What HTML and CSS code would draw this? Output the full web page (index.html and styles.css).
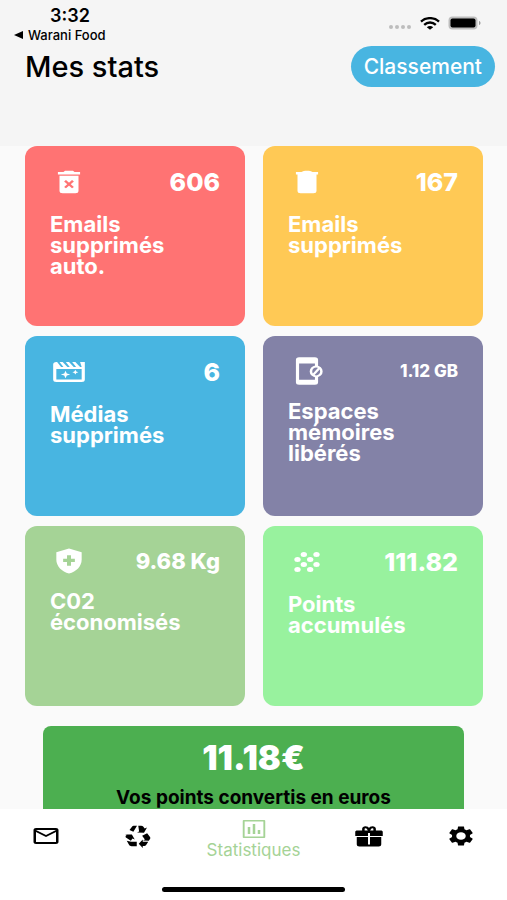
FILE: index.html
```html
<!DOCTYPE html>
<html lang="fr">
<head>
  <meta charset="UTF-8">
  <meta name="viewport" content="width=device-width, initial-scale=1.0">
  <title>Mes stats</title>
  <link rel="stylesheet" href="styles.css">
</head>
<body>
  <header class="header">
    <div class="status">
      <div class="status-left">
        <span class="time">3:32</span>
        <a class="back" href="#">
          <svg class="back-arrow" viewBox="0 0 9 8"><path d="M0 4L9 0v8z"/></svg>
          Warani Food
        </a>
      </div>
      <div class="status-right">
        <svg class="signal" viewBox="0 0 24 14" fill="#bdbdbd">
          <circle cx="3" cy="11" r="2"/><circle cx="9" cy="11" r="2"/><circle cx="15" cy="11" r="2"/><circle cx="21" cy="11" r="2"/>
        </svg>
        <svg class="wifi" viewBox="0 0 20 13" preserveAspectRatio="none" fill="none" stroke="#000" stroke-width="2.4">
          <path d="M1 4.6C6 0 14 0 19 4.6"/>
          <path d="M4.2 7.8c3.300-3 8.300-3 11.600 0"/>
          <path d="M10 12.800L6.800 10.300c1.800-1.600 4.600-1.600 6.400 0z" fill="#000" stroke="none"/>
        </svg>
        <svg class="battery" viewBox="0 0 33 14">
          <rect x="0.500" y="0.500" width="29" height="13" rx="4" fill="#bdbdbd"/>
          <rect x="2.500" y="2.500" width="25" height="9" rx="2"/>
          <path d="M31 5c2 .6 2 3.400 0 4z" fill="#9e9e9e"/>
        </svg>
      </div>
    </div>
    <div class="title-row">
      <h1 class="title">Mes stats</h1>
      <button class="ranking" type="button">Classement</button>
    </div>
  </header>

  <main class="content">
    <div class="cards">
      <section class="card red">
        <div class="card-top">
          <svg class="icon" viewBox="0 0 24 24" preserveAspectRatio="none">
            <path d="M19 4h-3.500l-1-1h-5l-1 1H5v2h14zM6 19a2 2 0 0 0 2 2h8a2 2 0 0 0 2-2V7H6z"/>
            <path d="M9.500 11l5 5.500m0-5.500l-5 5.500" fill="none" stroke="#ff7373" stroke-width="1.600"/>
          </svg>
          <span class="value">606</span>
        </div>
        <h2 class="label">Emails supprimés auto.</h2>
      </section>

      <section class="card yellow">
        <div class="card-top">
          <svg class="icon" viewBox="0 0 24 24" preserveAspectRatio="none">
            <path d="M19 4h-3.500C14 2.700 10 2.700 8.500 4H5v2h14zM6 19a2 2 0 0 0 2 2h8a2 2 0 0 0 2-2V6H6z"/>
          </svg>
          <span class="value">167</span>
        </div>
        <h2 class="label">Emails supprimés</h2>
      </section>

      <section class="card blue">
        <div class="card-top">
          <svg class="icon" viewBox="0 0 24 24" preserveAspectRatio="none">
            <path fill-rule="evenodd" d="M22 4h-3l1 4h-1l-3-4h-2l2.500 4h-1.500l-3-4h-2l2.500 4H11L8 4H6l2.500 4H7L4.500 4H4a2 2 0 0 0-2 2v12a2 2 0 0 0 2 2h16a2 2 0 0 0 2-2zM4 9.600h16V18H4z"/>
            <path d="M9.800 11l.8 2.200 2.200.8-2.200.8-.8 2.200-.8-2.200-2.200-.8 2.200-.8zM16 10.200l.6 1.300 1.300.6-1.300.6-.6 1.300-.6-1.300-1.300-.6 1.300-.6z"/>
          </svg>
          <span class="value">6</span>
        </div>
        <h2 class="label">Médias supprimés</h2>
      </section>

      <section class="card purple">
        <div class="card-top compact">
          <svg class="icon" viewBox="0 0 24 24" preserveAspectRatio="none">
            <path d="M7 1h10a2 2 0 0 1 2 2v5h-2V6H7v13h10v-3h2v5a2 2 0 0 1-2 2H7a2 2 0 0 1-2-2V3a2 2 0 0 1 2-2z"/>
            <ellipse cx="17.800" cy="12.300" rx="3.300" ry="4" fill="none" stroke="#fff" stroke-width="1.600"/>
            <path d="M16 15l3.800-5.300" stroke="#fff" stroke-width="1.600"/>
          </svg>
          <span class="value value-small">1.12 GB</span>
        </div>
        <h2 class="label">Espaces mémoires libérés</h2>
      </section>

      <section class="card olive">
        <div class="card-top compact">
          <svg class="icon" viewBox="0 0 24 24" preserveAspectRatio="none">
            <path d="M12 2L4 5v6.090c0 5.050 3.410 9.760 8 10.910 4.590-1.150 8-5.860 8-10.910V5z"/>
            <path d="M12 7.300v8.400M8.300 11.500h7.400" stroke="#a5d396" stroke-width="2.500"/>
          </svg>
          <span class="value value-medium">9.68 Kg</span>
        </div>
        <h2 class="label">C02 économisés</h2>
      </section>

      <section class="card mint">
        <div class="card-top">
          <svg class="icon" viewBox="0 0 24 24" preserveAspectRatio="none">
            <circle cx="10" cy="6" r="2"/><circle cx="18" cy="6" r="2"/>
            <circle cx="6" cy="10" r="2"/><circle cx="14" cy="10" r="2"/>
            <circle cx="10" cy="14" r="2"/><circle cx="18" cy="14" r="2"/>
            <circle cx="6" cy="18" r="2"/><circle cx="14" cy="18" r="2"/>
          </svg>
          <span class="value">111.82</span>
        </div>
        <h2 class="label">Points accumulés</h2>
      </section>
    </div>

    <section class="euros">
      <p class="amount">11.18€</p>
      <p class="amount-label">Vos points convertis en euros</p>
    </section>
  </main>

  <footer class="footer">
    <nav class="tabs">
      <a class="tab" href="#" aria-label="Emails">
        <svg class="tab-icon" viewBox="0 0 24 24" preserveAspectRatio="none">
          <path d="M22 6c0-1.100-.9-2-2-2H4c-1.100 0-2 .9-2 2v12c0 1.100.9 2 2 2h16c1.100 0 2-.9 2-2V6zm-2 0l-8 5-8-5h16zm0 12H4V8l8 5 8-5v10z"/>
        </svg>
      </a>
      <a class="tab" href="#" aria-label="Recyclage">
        <svg class="tab-icon" viewBox="0 0 24 24" preserveAspectRatio="none">
          <path d="M8.300 7.800L5.200 6l2-3.300c.4-.7 1-.9 1.700-.9h2.300zM12.200 1.800h2.300c.8 0 1.400.4 1.800 1l1 1.700 1.900-1-2.400 5.200-5.600-.2 1.700-1.100zM1.600 10.500l5.500.1 2.300 4.900-1.800-1-1.300 2.300-4-3.300c-.4-.8-.3-1.500.2-2.300l.8-.3zM3 16.800l3.500 1H11v4.400H6.800c-.9 0-1.500-.4-1.900-1.100zM19.300 9.200l2.300 3.800c.4.700.4 1.400 0 2.100l-1 1.700-4.600-.2 1.500-1-2.200-3.900zM20.200 17.800l-1.700 3.200c-.4.700-1 1.100-1.900 1.100h-.8V24l-3.200-4.200 3.200-4.200v2.200z"/>
        </svg>
      </a>
      <a class="tab active" href="#">
        <svg class="tab-icon" viewBox="0 0 24 24" preserveAspectRatio="none">
          <path d="M9 17H7v-7h2v7zm4 0h-2V7h2v10zm4 0h-2v-4h2v4zm2.500 2.400h-15V4.600h15v14.800zM20 3H4c-.6 0-1 .4-1 1v16c0 .6.400 1 1 1h16c.6 0 1-.4 1-1V4c0-.6-.4-1-1-1z"/>
        </svg>
        Statistiques
      </a>
      <a class="tab" href="#" aria-label="Cadeaux">
        <svg class="tab-icon" viewBox="0 0 24 24" preserveAspectRatio="none">
          <path d="M2.500 6.500h19c.8 0 1.500.6 1.500 1.400V12H1V7.900c0-.8.700-1.400 1.500-1.400zM2.200 13h19.600v7.500a2 2 0 0 1-2 2H4.200a2 2 0 0 1-2-2z"/>
          <path d="M7.500 7V4.800c0-2 3-2 4 .2l.5 1.500.5-1.500c1-2.200 4-2.200 4-.2V7" fill="none" stroke="#000" stroke-width="2"/>
          <path d="M12 9v11.500" stroke="#fff" stroke-width="1.600"/>
        </svg>
      </a>
      <a class="tab" href="#" aria-label="Réglages">
        <svg class="tab-icon" viewBox="0 0 24 24" preserveAspectRatio="none">
          <path d="M19.140 12.940c.04-.3.060-.61.060-.94 0-.32-.02-.64-.07-.94l2.030-1.580c.18-.14.230-.41.120-.61l-1.920-3.320c-.12-.22-.37-.29-.59-.22l-2.390.96c-.5-.38-1.030-.7-1.620-.94l-.36-2.540c-.04-.24-.24-.41-.48-.41h-3.840c-.24 0-.43.170-.47.410l-.36 2.540c-.59.240-1.130.570-1.620.940l-2.390-.96c-.22-.08-.47 0-.59.220L2.740 8.870c-.12.210-.08.470.120.610l2.030 1.580c-.05.300-.09.630-.09.940s.02.640.070.940l-2.030 1.580c-.18.140-.23.410-.12.610l1.920 3.320c.12.220.370.290.590.220l2.390-.96c.5.380 1.030.700 1.620.940l.36 2.540c.05.240.240.410.480.410h3.840c.24 0 .44-.17.470-.41l.36-2.540c.59-.24 1.130-.56 1.620-.94l2.390.96c.22.080.470 0 .59-.22l1.920-3.320c.12-.22.070-.47-.12-.61z"/>
          <circle cx="12" cy="12" r="3.800" fill="#fff"/>
        </svg>
      </a>
    </nav>
    <div class="home-bar"></div>
  </footer>
</body>
</html>
```
FILE: styles.css
```css
* {box-sizing: border-box;}
body {display: flex; flex-direction: column; height: 100vh; margin: 0; font-family: Inter, "Liberation Sans", sans-serif; color: #000; background-color: #fafafa;}
h1, h2, p {margin: 0;}
a {color: inherit; text-decoration: none;}
svg {display: block; flex-shrink: 0;}

.header {flex-shrink: 0; padding-bottom: 59px; background-color: #f5f5f5;}
.status {display: flex; justify-content: space-between; height: 46px; padding: 6px 26px 0 14px;}
.status-left {display: flex; flex-direction: column;}
.time {padding-left: 36px; font-size: 18px; line-height: 20px; font-weight: 600;}
.back {display: flex; align-items: center; gap: 5px; font-size: 13px; line-height: 18px; font-weight: 500;}
.back-arrow {width: 9px; height: 8px;}
.status-right {display: flex; align-items: center; gap: 8px; height: 34px;}
.signal {width: 24px; height: 14px;}
.wifi {width: 20px; height: 13px;}
.battery {width: 33px; height: 14px;}

.title-row {display: flex; align-items: center; justify-content: space-between; padding: 0 12px 0 25px;}
.title {font-size: 29px; line-height: 36px; font-weight: 500;}
.ranking {padding: 0 13px; border: none; border-radius: 21px; font-family: inherit; font-size: 21px; line-height: 41px; font-weight: 500; color: #fff; background-color: #48b5e1; cursor: pointer;}

.content {flex: 1; min-height: 0; overflow-y: auto; scrollbar-width: none;}
.cards {display: grid; grid-template-columns: 1fr 1fr; gap: 10px 18px; padding: 0 24px 0 25px;}
.card {min-height: 180px; padding: 18px 25px 16px; border-radius: 12px; color: #fff;}
.card-top {display: flex; align-items: center; justify-content: space-between; height: 36px; margin-bottom: 14px;}
.compact {height: 33px;}
.icon {width: 38px; height: 30px; fill: #fff;}
.value {font-size: 25px; font-weight: 800;}
.value-medium {font-size: 22px;}
.value-small {font-size: 17px;}
.label {max-width: 150px; font-size: 22px; line-height: 21px; font-weight: 700;}
.red {background-color: #ff7373;}
.yellow {background-color: #ffc955;}
.blue {background-color: #48b5e1;}
.purple {background-color: #8382a7;}
.olive {background-color: #a5d396;}
.mint {background-color: #98f29e;}

.euros {margin: 20px 43px; padding: 12px 16px 20px; border-radius: 8px; text-align: center; background-color: #4caf50;}
.amount {font-size: 34px; line-height: 40px; font-weight: 900; color: #fff;}
.amount-label {margin-top: 10px; font-size: 19px; line-height: 20px; font-weight: 700;}

.footer {flex-shrink: 0; padding-bottom: 8px; background-color: #fff;}
.tabs {display: flex; height: 54px; margin-bottom: 24px;}
.tab {display: flex; flex: 2; flex-direction: column; align-items: center; justify-content: center;}
.tab-icon {width: 30px; height: 24px; fill: currentColor;}
.active {flex: 3; padding-top: 4px; font-size: 17px; line-height: 18px; color: #a5d396;}
.home-bar {width: 36%; height: 5px; margin: 0 auto; border-radius: 3px; background-color: #000;}
```
